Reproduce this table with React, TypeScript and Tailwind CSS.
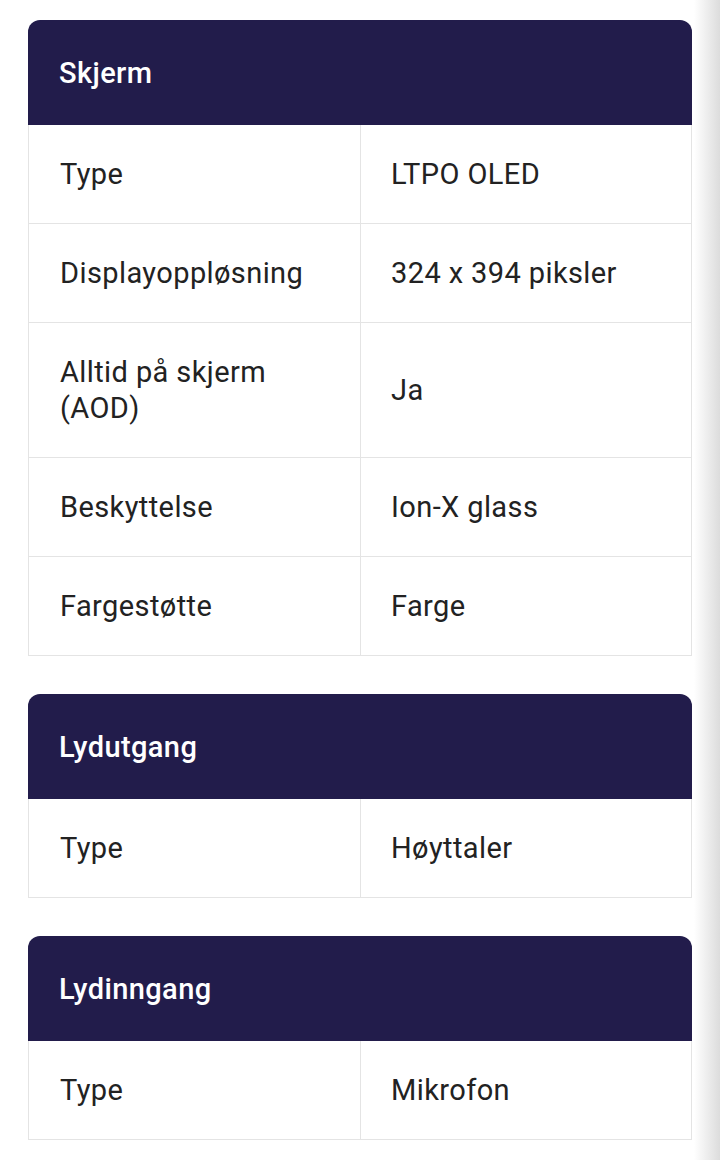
const sections = [
  {
    title: "Skjerm",
    rows: [
      ["Type", "LTPO OLED"],
      ["Displayoppløsning", "324 x 394 piksler"],
      ["Alltid på skjerm (AOD)", "Ja"],
      ["Beskyttelse", "Ion-X glass"],
      ["Fargestøtte", "Farge"],
    ],
  },
  {
    title: "Lydutgang",
    rows: [["Type", "Høyttaler"]],
  },
  {
    title: "Lydinngang",
    rows: [["Type", "Mikrofon"]],
  },
];

export default function App() {
  return (
    <div className="relative min-h-[1160px] bg-white font-['Roboto',sans-serif] text-[#222222]">
      <div className="flex flex-col gap-[38px] px-[28px] pt-[20px]">
        {sections.map((section) => (
          <div key={section.title} className="w-[664px]">
            <div className="flex h-[105px] items-center rounded-t-[12px] bg-[#221c4b] px-[31px]">
              <h2 className="text-[29px] font-medium leading-[36px] tracking-[0.4px] text-white">{section.title}</h2>
            </div>
            <div className="border-x border-[#e4e4e4]">
              {section.rows.map(([label, value]) => (
                <div key={label} className="grid grid-cols-2 border-b border-[#e4e4e4] text-[29px] leading-[36px] tracking-[0.4px]">
                  <div className="flex items-center py-[31px] pr-[20px] pl-[31px]">{label}</div>
                  <div className="flex items-center border-l border-[#e4e4e4] py-[31px] pr-[20px] pl-[30px]">
                    {value}
                  </div>
                </div>
              ))}
            </div>
          </div>
        ))}
      </div>
      {/* scroll shadow on the right edge */}
      <div className="pointer-events-none absolute inset-y-0 right-0 w-[26px] bg-gradient-to-r from-white/0 to-[#dcdcdc]" />
    </div>
  );
}
